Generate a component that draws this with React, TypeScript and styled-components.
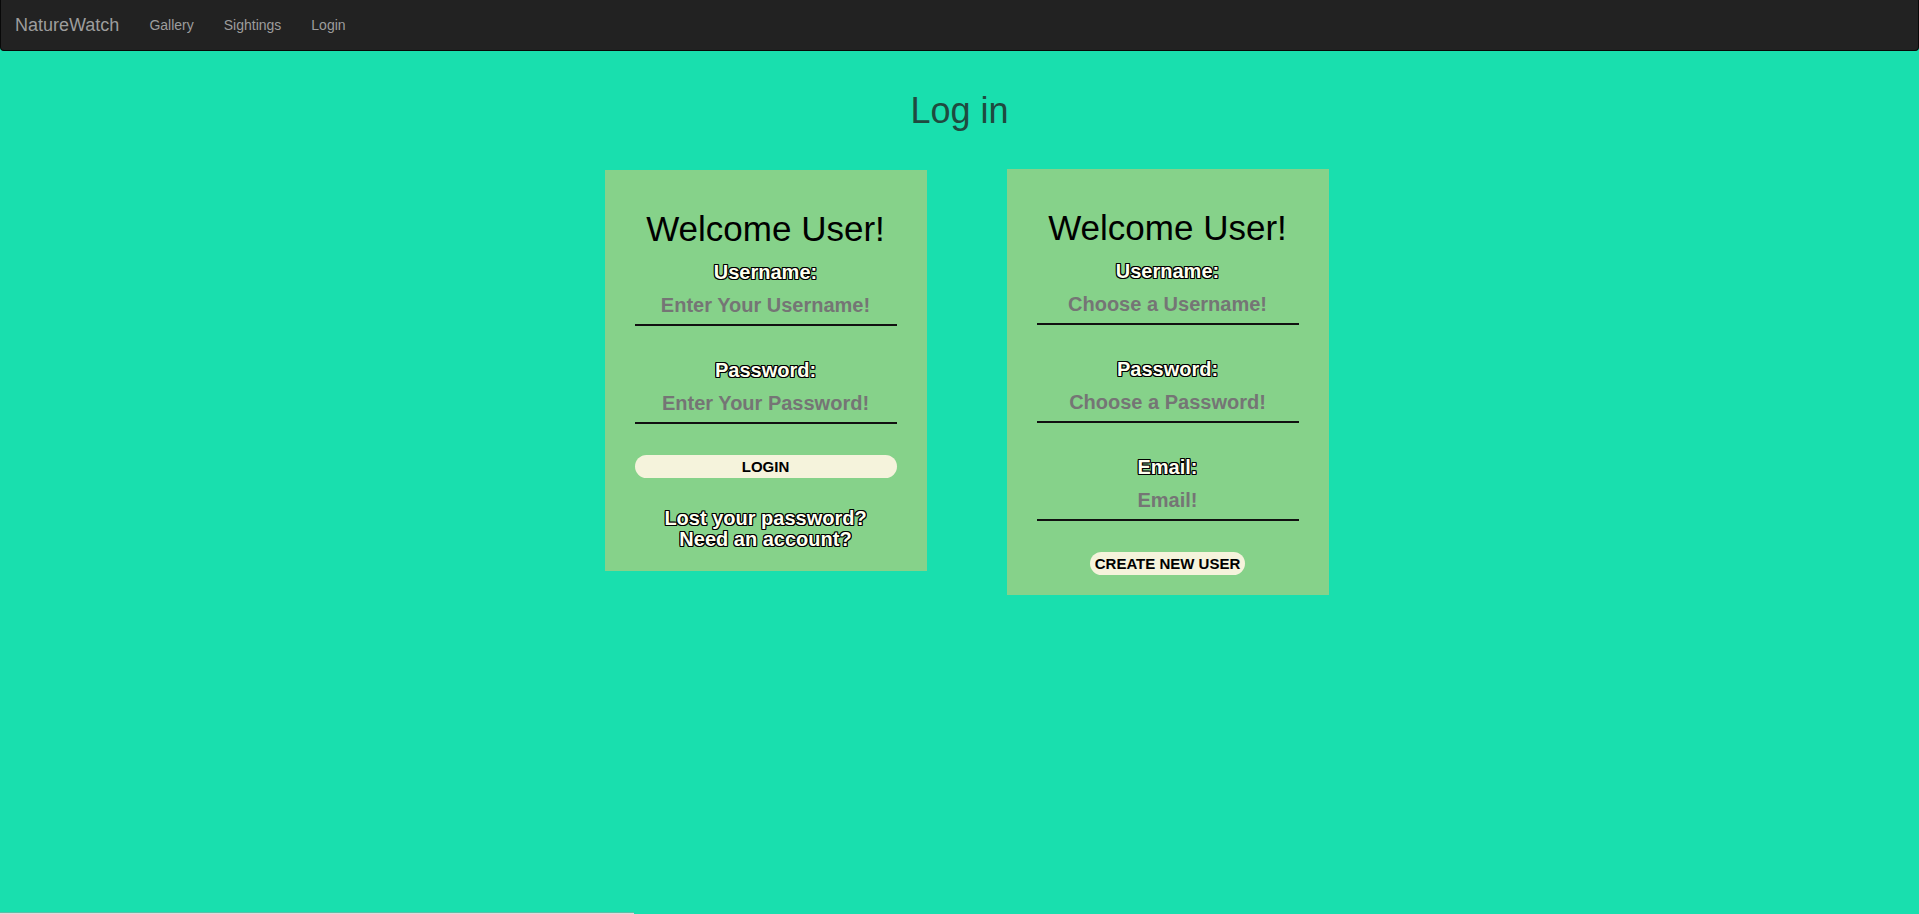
import React from "react";
import styled, { createGlobalStyle } from "styled-components";

const GlobalStyle = createGlobalStyle`
  *, *::before, *::after { box-sizing: border-box; }
  html, body { margin: 0; padding: 0; }
  body {
    background: #19dfae;
    font-family: "Liberation Sans", Arial, Helvetica, sans-serif;
    font-size: 14px;
    line-height: 1.42857;
    color: #333;
    overflow: hidden;
  }
`;

const Navbar = styled.nav`
  display: flex;
  align-items: stretch;
  height: 51px;
  margin-bottom: 20px;
  padding: 0 15px 0 14px;
  background: #222;
  border: 1px solid #080808;
  border-top: none;
  border-radius: 0 0 4px 4px;
`;

const Brand = styled.a`
  display: block;
  margin-left: -15px;
  padding: 15px;
  height: 50px;
  font-size: 18px;
  line-height: 20px;
  color: #9d9d9d;
  text-decoration: none;
`;

const NavList = styled.ul`
  display: flex;
  margin: 0;
  padding: 0;
  list-style: none;
`;

const NavLink = styled.a`
  display: block;
  padding: 15px;
  font-size: 14px;
  line-height: 20px;
  color: #9d9d9d;
  text-decoration: none;
`;

const Main = styled.main`
  display: flex;
  flex-direction: column;
  align-items: center;
  height: 841px;
`;

const PageTitle = styled.h1`
  margin: 20px 0 0;
  font-size: 36px;
  font-weight: 400;
  line-height: 40px;
  color: #1f4a3f;
`;

const CardRow = styled.div`
  display: flex;
  align-items: flex-start;
  gap: 80px;
  margin: 39px 0 0 14px;
`;

const Card = styled.form<{ $raised?: boolean }>`
  display: flex;
  flex-direction: column;
  align-items: center;
  width: 322px;
  margin-top: ${(p) => (p.$raised ? "-1px" : "0")};
  padding: 39px 30px ${(p) => (p.$raised ? "20px" : "21px")};
  background: #86d28a;
`;

const CardTitle = styled.h2`
  margin: 0 0 12px;
  font-size: 35px;
  font-weight: 400;
  line-height: 40px;
  color: #000;
  white-space: nowrap;
`;

const Field = styled.div<{ $last?: boolean }>`
  display: flex;
  flex-direction: column;
  align-items: center;
  width: 100%;
  margin-bottom: ${(p) => (p.$last ? "31px" : "33px")};
`;

const outlined = `
  color: #fffff0;
  text-shadow: -1px -1px 0 #000, 1px -1px 0 #000, -1px 1px 0 #000, 1px 1px 0 #000,
    0 -1px 0 #000, 0 1px 0 #000, -1px 0 0 #000, 1px 0 0 #000;
`;

const Label = styled.label`
  display: block;
  margin-bottom: 2px;
  font-size: 20px;
  font-weight: 700;
  line-height: 23px;
  ${outlined}
`;

const TextInput = styled.input`
  display: block;
  width: 100%;
  height: 40px;
  margin: 0;
  padding: 8px 0 7px;
  border: none;
  border-bottom: 2px solid #111;
  background: transparent;
  font-family: inherit;
  font-size: 20px;
  font-weight: 700;
  line-height: 23px;
  text-align: center;
  color: #222;
  outline: none;
  &::placeholder { color: #757575; opacity: 1; }
`;

const PillButton = styled.button<{ $full?: boolean }>`
  display: block;
  width: ${(p) => (p.$full ? "100%" : "auto")};
  height: 23px;
  margin: 0;
  padding: 3px 5px;
  border: none;
  border-radius: 12px;
  background: #f5f3dc;
  font-family: inherit;
  font-size: 15px;
  font-weight: 700;
  line-height: 17px;
  color: #000;
  text-transform: uppercase;
  cursor: pointer;
`;

const Links = styled.div`
  display: flex;
  flex-direction: column;
  align-items: center;
  margin-top: 30px;
`;

const HelpLink = styled.a`
  display: block;
  font-size: 20px;
  font-weight: 700;
  line-height: 21px;
  text-decoration: none;
  ${outlined}
`;

const BottomRule = styled.div`
  width: 634px;
  height: 2px;
  border-top: 1px solid #5fbfa6;
  background: #dcdedd;
`;

export default function App() {
  return (
    <>
      <GlobalStyle />
      <Navbar>
        <Brand href="#">NatureWatch</Brand>
        <NavList>
          <li><NavLink href="#">Gallery</NavLink></li>
          <li><NavLink href="#">Sightings</NavLink></li>
          <li><NavLink href="#">Login</NavLink></li>
        </NavList>
      </Navbar>
      <Main>
        <PageTitle>Log in</PageTitle>
        <CardRow>
          <Card onSubmit={(e) => e.preventDefault()}>
            <CardTitle>Welcome User!</CardTitle>
            <Field>
              <Label htmlFor="login-username">Username:</Label>
              <TextInput id="login-username" placeholder="Enter Your Username!" />
            </Field>
            <Field $last>
              <Label htmlFor="login-password">Password:</Label>
              <TextInput id="login-password" type="password" placeholder="Enter Your Password!" />
            </Field>
            <PillButton $full type="submit">Login</PillButton>
            <Links>
              <HelpLink href="#">Lost your password?</HelpLink>
              <HelpLink href="#">Need an account?</HelpLink>
            </Links>
          </Card>
          <Card $raised onSubmit={(e) => e.preventDefault()}>
            <CardTitle>Welcome User!</CardTitle>
            <Field>
              <Label htmlFor="new-username">Username:</Label>
              <TextInput id="new-username" placeholder="Choose a Username!" />
            </Field>
            <Field>
              <Label htmlFor="new-password">Password:</Label>
              <TextInput id="new-password" type="password" placeholder="Choose a Password!" />
            </Field>
            <Field $last>
              <Label htmlFor="new-email">Email:</Label>
              <TextInput id="new-email" type="email" placeholder="Email!" />
            </Field>
            <PillButton type="submit">Create New User</PillButton>
          </Card>
        </CardRow>
      </Main>
      <BottomRule />
    </>
  );
}
